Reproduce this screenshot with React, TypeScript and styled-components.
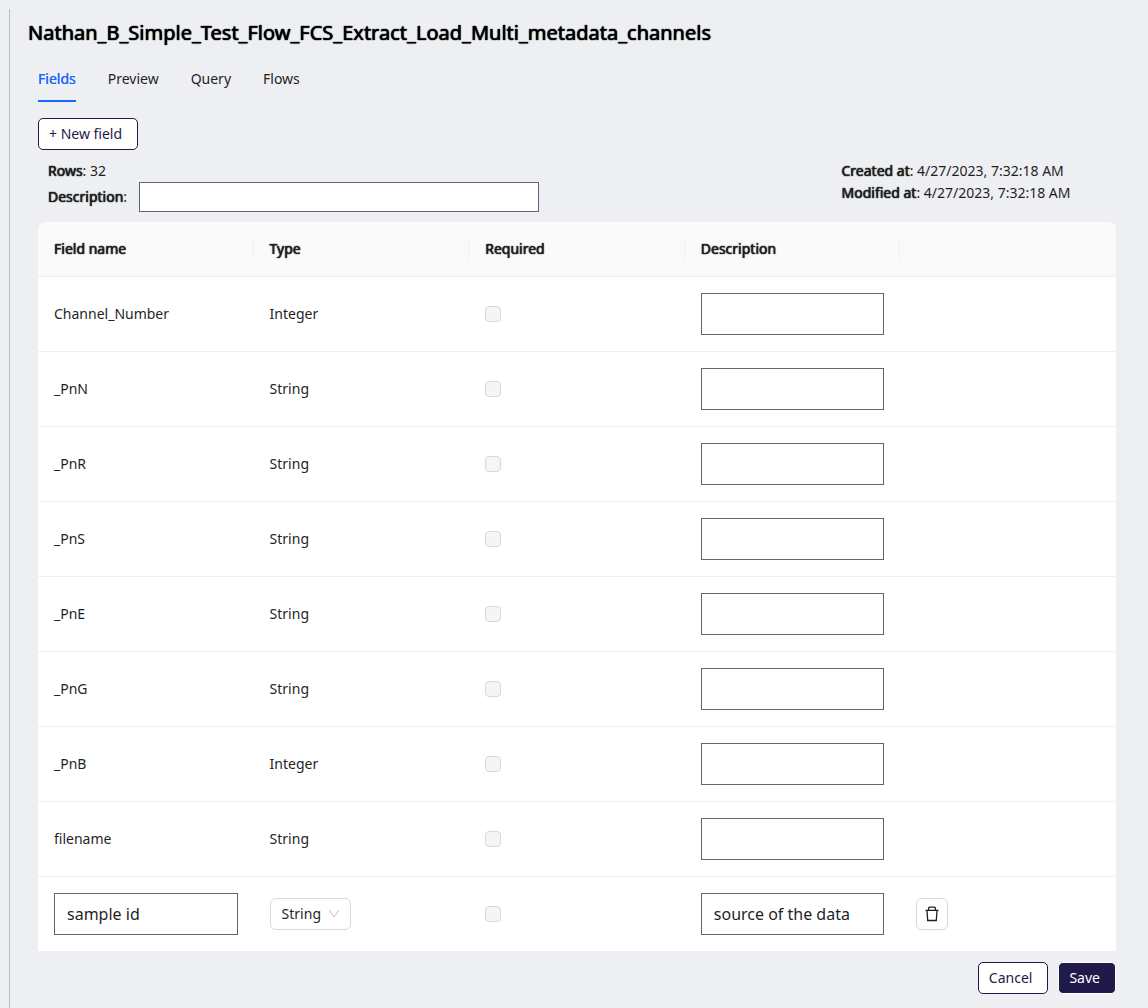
import React, { useState } from "react";
import styled, { createGlobalStyle, css } from "styled-components";

const colors = {
  page: "#eeeff3",
  ink: "#1f1f1f",
  navy: "#1f1a4a",
  blue: "#1668ff",
  field: "#5f6673",
  line: "#f0f0f0",
  control: "#d9d9d9",
};

const fontStack = `"Noto Sans", "Open Sans", sans-serif`;

const GlobalStyle = createGlobalStyle`
  *, *::before, *::after { box-sizing: border-box; }
  body {
    margin: 0;
    background: ${colors.page};
    color: ${colors.ink};
    font: 14px/22px ${fontStack};
  }
  button, input, select { font: inherit; color: inherit; margin: 0; }
`;

/* Keeps the advance widths of the regular face while thickening the strokes. */
const emphasis = css`
  font-weight: 400;
  text-shadow: 0 0 1px currentColor, 0 0 1px currentColor;
`;

const Page = styled.main`
  min-height: calc(100vh - 9px);
  margin: 9px 22px 0 9px;
  padding: 8px 0 14px 18px;
  border-left: 1px solid #bfc0c5;
`;

const Title = styled.h1`
  margin: 0;
  color: #000;
  font-size: 20px;
  line-height: 32px;
  ${emphasis}
`;

const Content = styled.div`
  padding: 8px 10px 0;
`;

const Tabs = styled.nav`
  display: flex;
  gap: 32px;
  margin: 0 0 16px;
  box-shadow: inset 0 -1px 0 #ecedf0;
`;

const Tab = styled.a<{ $active?: boolean }>`
  padding: 11px 0 10px;
  border-bottom: 2px solid ${(p) => (p.$active ? colors.blue : "transparent")};
  color: ${(p) => (p.$active ? colors.blue : colors.ink)};
  ${(p) => p.$active && "text-shadow: 0 0 0 currentColor;"}
  text-decoration: none;
`;

const Button = styled.button<{ $primary?: boolean }>`
  height: 32px;
  padding: 0 15px 0 10px;
  border: 1px solid ${(p) => (p.$primary ? "#fff" : colors.navy)};
  border-radius: 5px;
  background: ${(p) => (p.$primary ? colors.navy : "#fff")};
  color: ${(p) => (p.$primary ? "#fff" : colors.navy)};
  cursor: pointer;
`;

const Summary = styled.section`
  display: grid;
  grid-template-columns: 3fr 1fr;
  padding: 10px;
`;

const Strong = styled.strong`
  ${emphasis}
`;

const DescriptionLine = styled.div`
  display: flex;
  align-items: center;
  gap: 12px;
`;

const TextInput = styled.input<{ $compact?: boolean }>`
  display: block;
  width: ${(p) => (p.$compact ? "400px" : "100%")};
  height: ${(p) => (p.$compact ? "30px" : "42px")};
  padding: 0 12px;
  border: 1px solid ${colors.field};
  border-radius: 0;
  background: #fff;
  font-size: 16px;
`;

const Table = styled.table`
  width: 100%;
  table-layout: fixed;
  border-collapse: separate;
  border-spacing: 0;
  border-radius: 8px 8px 0 0;
  background: #fff;
`;

const HeadCell = styled.th`
  padding: 16px 0 16px 16px;
  border-bottom: 1px solid ${colors.line};
  background: #fafafa;
  text-align: left;
  ${emphasis}
  &:first-child { border-top-left-radius: 8px; }
  &:last-child { border-top-right-radius: 8px; }
`;

const HeadLabel = styled.div<{ $divided?: boolean }>`
  height: 22px;
  border-right: ${(p) => (p.$divided ? `1px solid ${colors.line}` : "0")};
`;

const Cell = styled.td`
  height: 75px;
  padding: 16px;
  border-bottom: 1px solid ${colors.line};
  vertical-align: middle;
`;

const Checkbox = styled.input`
  display: block;
  appearance: none;
  width: 16px;
  height: 16px;
  border: 1px solid ${colors.control};
  border-radius: 4px;
  background: #f5f5f5;
`;

const SelectBox = styled.div`
  display: inline-grid;
  align-items: center;
  vertical-align: middle;
  & > * { grid-area: 1 / 1; }
  & > svg {
    justify-self: end;
    margin-right: 11px;
    pointer-events: none;
  }
`;

const Select = styled.select`
  appearance: none;
  width: 81px;
  height: 32px;
  padding: 0 11px;
  border: 1px solid ${colors.control};
  border-radius: 6px;
  background: #fff;
`;

const IconButton = styled.button`
  display: flex;
  align-items: center;
  justify-content: center;
  width: 32px;
  height: 32px;
  padding: 0;
  border: 1px solid ${colors.control};
  border-radius: 6px;
  background: #fff;
  box-shadow: 0 2px 0 rgba(0, 0, 0, 0.02);
  cursor: pointer;
`;

const Actions = styled.footer`
  display: flex;
  justify-content: flex-end;
  gap: 10px;
  padding-top: 10px;
`;

const ChevronIcon = () => (
  <svg width="12" height="12" viewBox="0 0 12 12" fill="none" stroke="#bfbfbf" aria-hidden="true">
    <path d="M1.3 2.2 6 9l4.7-6.8" />
  </svg>
);

const TrashIcon = () => (
  <svg width="16" height="16" viewBox="0 0 16 16" fill="none" stroke="#1f1f1f" strokeWidth="1.3" aria-hidden="true">
    <path d="M1.5 4.3h13M4.6 4.2V2.2q0-1 1-1h4.8q1 0 1 1v2M3 4.5l.7 10h8.6l.7-10" />
  </svg>
);

const columns = ["Field name", "Type", "Required", "Description", ""];

const fields = [
  { name: "Channel_Number", type: "Integer" },
  { name: "_PnN", type: "String" },
  { name: "_PnR", type: "String" },
  { name: "_PnS", type: "String" },
  { name: "_PnE", type: "String" },
  { name: "_PnG", type: "String" },
  { name: "_PnB", type: "Integer" },
  { name: "filename", type: "String" },
];

export default function App() {
  const [tab, setTab] = useState("Fields");

  return (
    <>
      <GlobalStyle />
      <Page>
        <Title>Nathan_B_Simple_Test_Flow_FCS_Extract_Load_Multi_metadata_channels</Title>
        <Content>
          <Tabs>
            {["Fields", "Preview", "Query", "Flows"].map((t) => (
              <Tab key={t} href={`#${t.toLowerCase()}`} $active={t === tab} onClick={() => setTab(t)}>
                {t}
              </Tab>
            ))}
          </Tabs>
          <Button type="button">+ New field</Button>
          <Summary>
            <div>
              <div><Strong>Rows</Strong>: 32</div>
              <DescriptionLine>
                <label htmlFor="description"><Strong>Description</Strong>:</label>
                <TextInput id="description" $compact />
              </DescriptionLine>
            </div>
            <div>
              <div><Strong>Created at</Strong>: 4/27/2023, 7:32:18 AM</div>
              <div><Strong>Modified at</Strong>: 4/27/2023, 7:32:18 AM</div>
            </div>
          </Summary>
          <Table>
            <thead>
              <tr>
                {columns.map((c, i) => (
                  <HeadCell key={i} scope="col">
                    <HeadLabel $divided={i < columns.length - 1}>{c}</HeadLabel>
                  </HeadCell>
                ))}
              </tr>
            </thead>
            <tbody>
              {fields.map((f) => (
                <tr key={f.name}>
                  <Cell>{f.name}</Cell>
                  <Cell>{f.type}</Cell>
                  <Cell><Checkbox type="checkbox" disabled aria-label={`${f.name} required`} /></Cell>
                  <Cell><TextInput aria-label={`${f.name} description`} /></Cell>
                  <Cell />
                </tr>
              ))}
              <tr>
                <Cell><TextInput aria-label="Field name" defaultValue="sample id" /></Cell>
                <Cell>
                  <SelectBox>
                    <Select aria-label="Type" defaultValue="String">
                      <option>String</option>
                      <option>Integer</option>
                    </Select>
                    <ChevronIcon />
                  </SelectBox>
                </Cell>
                <Cell><Checkbox type="checkbox" disabled aria-label="New field required" /></Cell>
                <Cell><TextInput aria-label="New field description" defaultValue="source of the data" /></Cell>
                <Cell><IconButton type="button" aria-label="Delete field"><TrashIcon /></IconButton></Cell>
              </tr>
            </tbody>
          </Table>
          <Actions>
            <Button type="button">Cancel</Button>
            <Button type="button" $primary>Save</Button>
          </Actions>
        </Content>
      </Page>
    </>
  );
}
